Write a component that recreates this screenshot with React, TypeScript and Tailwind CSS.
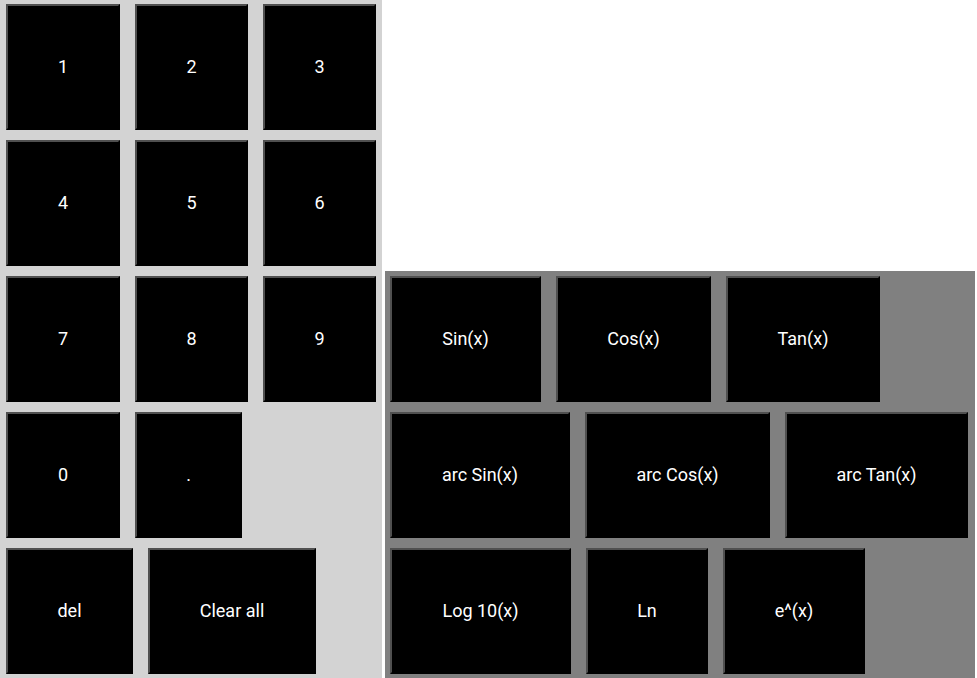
const digitKeys = [
  { label: '1', w: 'w-[114px]' },
  { label: '2', w: 'w-[113px]' },
  { label: '3', w: 'w-[113px]' },
  { label: '4', w: 'w-[114px]' },
  { label: '5', w: 'w-[113px]' },
  { label: '6', w: 'w-[113px]' },
  { label: '7', w: 'w-[114px]' },
  { label: '8', w: 'w-[113px]' },
  { label: '9', w: 'w-[113px]' },
  { label: '0', w: 'w-[114px]' },
  { label: '.', w: 'w-[107px]' },
  { label: 'del', w: 'w-[127px]' },
  { label: 'Clear all', w: 'w-[168px]' },
];

const funcKeys = [
  { label: 'Sin(x)', w: 'w-[151px]' },
  { label: 'Cos(x)', w: 'w-[155px]' },
  { label: 'Tan(x)', w: 'w-[154px]' },
  { label: 'arc Sin(x)', w: 'w-[180px]' },
  { label: 'arc Cos(x)', w: 'w-[185px]' },
  { label: 'arc Tan(x)', w: 'w-[183px]' },
  { label: 'Log 10(x)', w: 'w-[181px]' },
  { label: 'Ln', w: 'w-[122px]' },
  { label: 'e^(x)', w: 'w-[142px]' },
];

const Key = ({ label, w }: { label: string; w: string }) => (
  <button
    type="button"
    className={`${w} h-[126px] flex items-center justify-center bg-black text-white text-[18px] pb-[2px] border-2 border-t-[#505050] border-l-[#505050] border-b-black border-r-black`}
  >
    {label}
  </button>
);

const App = () => {
  return (
    <div
      className="w-[977px] h-[678px] overflow-hidden bg-white flex items-end gap-[3px]"
      style={{ fontFamily: 'Roboto, "Liberation Sans", sans-serif' }}
    >
      <div className="w-[382px] h-[678px] bg-[#d3d3d3] pl-[6px] pt-[4px] flex flex-wrap content-start gap-x-[15px] gap-y-[10px]">
        {digitKeys.map((k) => (
          <Key key={k.label} label={k.label} w={k.w} />
        ))}
      </div>
      <div className="w-[590px] h-[407px] bg-[#808080] pl-[5px] pt-[5px] flex flex-wrap content-start gap-x-[15px] gap-y-[10px]">
        {funcKeys.map((k) => (
          <Key key={k.label} label={k.label} w={k.w} />
        ))}
      </div>
    </div>
  );
};

export default App;
